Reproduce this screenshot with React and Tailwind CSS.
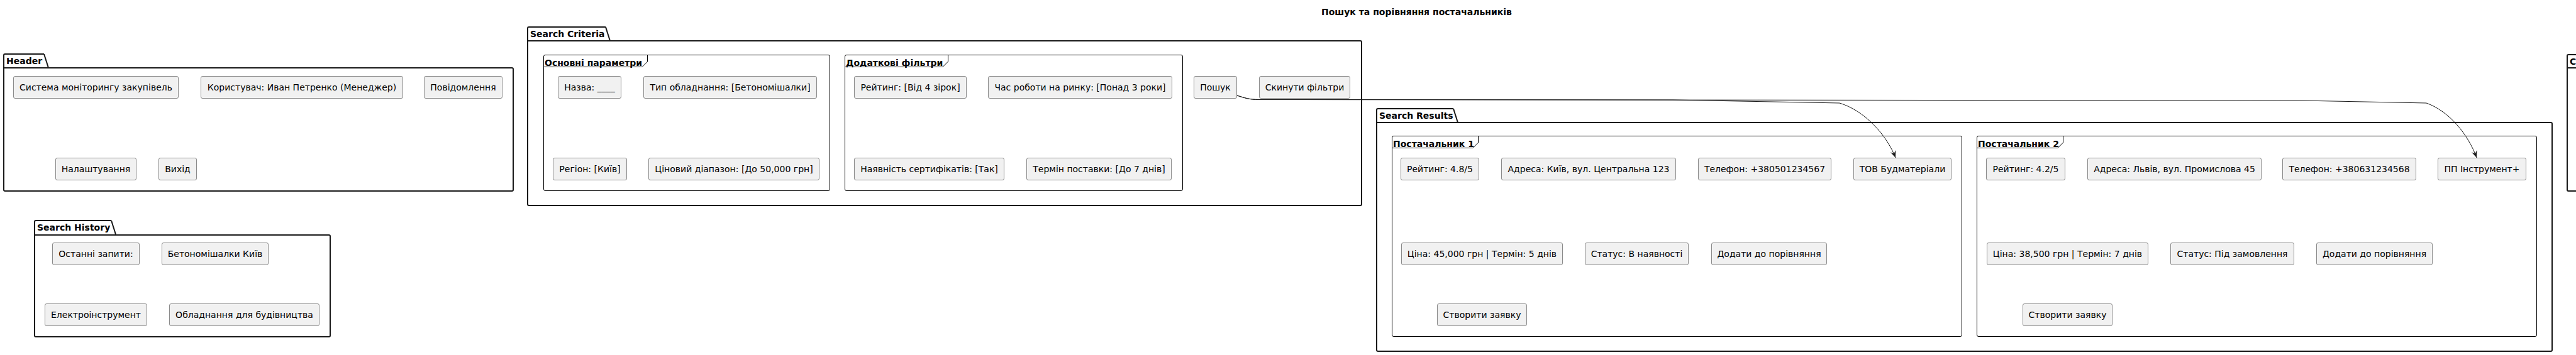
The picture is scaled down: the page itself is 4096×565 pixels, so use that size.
import React from 'react';

const boxes = [
  // Header
  ['left-[21px] top-[121px] w-[263px]', 'Система моніторингу закупівель'],
  ['left-[319px] top-[121px] w-[322px]', 'Користувач: Иван Петренко (Менеджер)'],
  ['left-[674px] top-[121px] w-[125px]', 'Повідомлення'],
  ['left-[88px] top-[251px] w-[129px]', 'Налаштування'],
  ['left-[252px] top-[251px] w-[61px]', 'Вихід'],
  // Search History
  ['left-[83px] top-[386px] w-[139px]', 'Останні запити:'],
  ['left-[257px] top-[386px] w-[170px]', 'Бетономішалки Київ'],
  ['left-[71px] top-[483px] w-[163px]', 'Електроінструмент'],
  ['left-[269px] top-[483px] w-[239px]', 'Обладнання для будівництва'],
  // Search Criteria
  ['left-[887px] top-[121px] w-[101px]', 'Назва: ____'],
  ['left-[1023px] top-[121px] w-[276px]', 'Тип обладнання: [Бетономішалки]'],
  ['left-[879px] top-[251px] w-[118px]', 'Регіон: [Київ]'],
  ['left-[1031px] top-[251px] w-[272px]', 'Ціновий діапазон: [До 50,000 грн]'],
  ['left-[1358px] top-[121px] w-[179px]', 'Рейтинг: [Від 4 зірок]'],
  ['left-[1571px] top-[121px] w-[293px]', 'Час роботи на ринку: [Понад 3 роки]'],
  ['left-[1358px] top-[251px] w-[239px]', 'Наявність сертифікатів: [Так]'],
  ['left-[1632px] top-[251px] w-[231px]', 'Термін поставки: [До 7 днів]'],
  ['left-[1898px] top-[121px] w-[69px]', 'Пошук'],
  ['left-[2002px] top-[121px] w-[145px]', 'Скинути фільтри'],
  // Постачальник 1
  ['left-[2227px] top-[251px] w-[125px]', 'Рейтинг: 4.8/5'],
  ['left-[2387px] top-[251px] w-[278px]', 'Адреса: Київ, вул. Центральна 123'],
  ['left-[2700px] top-[251px] w-[212px]', 'Телефон: +380501234567'],
  ['left-[2947px] top-[251px] w-[156px]', 'ТОВ Будматеріали'],
  ['left-[2228px] top-[386px] w-[257px]', 'Ціна: 45,000 грн | Термін: 5 днів'],
  ['left-[2520px] top-[386px] w-[165px]', 'Статус: В наявності'],
  ['left-[2721px] top-[386px] w-[184px]', 'Додати до порівняння'],
  ['left-[2285px] top-[483px] w-[143px]', 'Створити заявку'],
  // Постачальник 2
  ['left-[3158px] top-[251px] w-[126px]', 'Рейтинг: 4.2/5'],
  ['left-[3319px] top-[251px] w-[277px]', 'Адреса: Львів, вул. Промислова 45'],
  ['left-[3629px] top-[251px] w-[213px]', 'Телефон: +380631234568'],
  ['left-[3876px] top-[251px] w-[141px]', 'ПП Інструмент+'],
  ['left-[3159px] top-[386px] w-[257px]', 'Ціна: 38,500 грн | Термін: 7 днів'],
  ['left-[3451px] top-[386px] w-[197px]', 'Статус: Під замовлення'],
  ['left-[3683px] top-[386px] w-[185px]', 'Додати до порівняння'],
  ['left-[3216px] top-[483px] w-[143px]', 'Створити заявку'],
];

const Package = ({ label, tabCls, slantCls, bodyCls }) => (
  <>
    <div className={`absolute h-[24px] rounded-tl-[3px] border-l-2 border-t-2 border-[#181818] pl-[3px] text-[14px] font-bold leading-[20px] whitespace-nowrap ${tabCls}`}>
      {label}
    </div>
    {slantCls && (
      <svg className={`absolute h-[24px] w-[10px] ${slantCls}`} viewBox="0 0 10 24">
        <line x1="1" y1="1" x2="8" y2="23" stroke="#181818" strokeWidth="2" />
      </svg>
    )}
    <div className={`absolute rounded-[3px] rounded-tl-none border-2 border-[#181818] ${bodyCls}`} />
  </>
);

const Frame = ({ label, cls, labelCls, lw }) => (
  <div className={`absolute rounded-[3px] border border-black ${cls}`}>
    <div className={`absolute left-0 top-0 h-[19px] ${labelCls}`}>
      <svg className="absolute inset-0 h-full w-full" viewBox={`0 0 ${lw} 19`}>
        <polyline points={`0,18.5 ${lw - 9},18.5 ${lw - 0.5},10 ${lw - 0.5},0`} fill="none" stroke="#000" strokeWidth="1" />
      </svg>
      <span className="relative pl-[1px] text-[14px] font-bold leading-[18px] whitespace-nowrap">{label}</span>
    </div>
  </div>
);

const Arrow = ({ d, tip, angle }) => (
  <g>
    <path d={d} fill="none" stroke="#181818" strokeWidth="1" />
    <polygon
      points="0,0 -4.5,-11 0,-7 4.5,-11"
      fill="#181818"
      transform={`translate(${tip[0]} ${tip[1]}) rotate(${angle})`}
    />
  </g>
);

export default function App() {
  return (
    <div className="relative h-[565px] w-[4096px] overflow-hidden bg-white font-['DejaVu_Sans',sans-serif] text-black">
      <div className="absolute left-[2101px] top-[9px] text-[14px] font-bold whitespace-nowrap">
        Пошук та порівняння постачальників
      </div>

      <Package label="Header" tabCls="left-[5px] top-[85px] w-[65px]" slantCls="left-[69px] top-[85px]" bodyCls="left-[5px] top-[107px] w-[812px] h-[198px]" />
      <Package label="Search History" tabCls="left-[54px] top-[350px] w-[123px]" slantCls="left-[176px] top-[350px]" bodyCls="left-[54px] top-[373px] w-[472px] h-[164px]" />
      <Package label="Search Criteria" tabCls="left-[838px] top-[42px] w-[125px]" slantCls="left-[962px] top-[42px]" bodyCls="left-[838px] top-[64px] w-[1328px] h-[264px]" />
      <Package label="Search Results" tabCls="left-[2188px] top-[172px] w-[123px]" slantCls="left-[2310px] top-[172px]" bodyCls="left-[2188px] top-[194px] w-[1871px] h-[366px]" />
      <Package label="Comparison Table" tabCls="left-[4081px] top-[86px] w-[140px]" bodyCls="left-[4081px] top-[107px] w-[400px] h-[198px]" />

      <Frame label="Основні параметри" cls="left-[864px] top-[87px] w-[456px] h-[217px]" labelCls="w-[165px]" lw={165} />
      <Frame label="Додаткові фільтри" cls="left-[1343px] top-[87px] w-[538px] h-[217px]" labelCls="w-[164px]" lw={164} />
      <Frame label="Постачальник 1" cls="left-[2213px] top-[216px] w-[907px] h-[320px]" labelCls="w-[137px]" lw={137} />
      <Frame label="Постачальник 2" cls="left-[3143px] top-[216px] w-[891px] h-[320px]" labelCls="w-[137px]" lw={137} />

      {boxes.map(([cls, text], i) => (
        <div
          key={i}
          className={`absolute flex h-[36px] items-center justify-center rounded-[3px] border border-[#8a8a8a] bg-[#f1f1f1] text-[14px] whitespace-nowrap ${cls}`}
        >
          {text}
        </div>
      ))}

      <svg className="pointer-events-none absolute left-0 top-0 h-[565px] w-[4096px]" viewBox="0 0 4096 565">
        <Arrow
          d="M1967 152 C1980 156 1986 158.5 2002 158.5 L2660 159 L2925 164 C2965 176 3000 215 3014 251"
          tip={[3014, 251]}
          angle={-21}
        />
        <Arrow
          d="M1967 152 C1980 156 1986 158.5 2002 158.5 L3660 160 L3858 164 C3895 177 3925 215 3938 251"
          tip={[3938, 251]}
          angle={-20}
        />
      </svg>
    </div>
  );
}
